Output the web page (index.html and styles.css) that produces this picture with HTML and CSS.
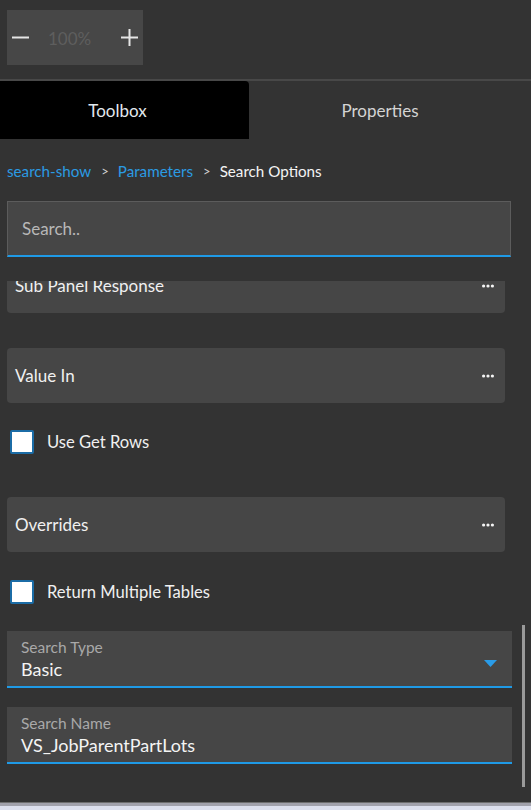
FILE: index.html
```html
<!DOCTYPE html>
<html lang="en">

<head>
    <meta charset="UTF-8">
    <meta name="viewport" content="width=device-width, initial-scale=1.0">
    <title>Properties Panel</title>
    <link rel="stylesheet" href="styles.css">
</head>

<body>
    <div class="top-bar">
        <div class="zoom-box">
            <button class="zoom-btn" aria-label="Zoom out">
                <svg width="17" height="17" viewBox="0 0 17 17"><rect x="0" y="7.5" width="17" height="2" fill="#e6e6e6"/></svg>
            </button>
            <span class="zoom-value">100%</span>
            <button class="zoom-btn" aria-label="Zoom in">
                <svg width="17" height="17" viewBox="0 0 17 17"><rect x="0" y="7.5" width="17" height="2" fill="#e6e6e6"/><rect x="7.5" y="0" width="2" height="17" fill="#e6e6e6"/></svg>
            </button>
        </div>
    </div>

    <div class="tabs">
        <div class="tab active">Toolbox</div>
        <div class="tab">Properties</div>
    </div>

    <div class="breadcrumb">
        <a href="#">search-show</a>
        <span class="sep">&gt;</span>
        <a href="#">Parameters</a>
        <span class="sep">&gt;</span>
        <span class="current">Search Options</span>
    </div>

    <div class="search-wrap">
        <input class="search" type="text" placeholder="Search..">
    </div>

    <div class="scroll-area">
        <div class="scroll-content">
            <div class="list">
                <div class="card">
                    <span>Sub Panel Response</span>
                    <svg class="more" width="12" height="4" viewBox="0 0 12 4"><circle cx="1.6" cy="2" r="1.6"/><circle cx="6" cy="2" r="1.6"/><circle cx="10.4" cy="2" r="1.6"/></svg>
                </div>
                <div class="card">
                    <span>Value In</span>
                    <svg class="more" width="12" height="4" viewBox="0 0 12 4"><circle cx="1.6" cy="2" r="1.6"/><circle cx="6" cy="2" r="1.6"/><circle cx="10.4" cy="2" r="1.6"/></svg>
                </div>
                <label class="check-row first-check">
                    <span class="checkbox"></span>
                    <span>Use Get Rows</span>
                </label>
                <div class="card overrides">
                    <span>Overrides</span>
                    <svg class="more" width="12" height="4" viewBox="0 0 12 4"><circle cx="1.6" cy="2" r="1.6"/><circle cx="6" cy="2" r="1.6"/><circle cx="10.4" cy="2" r="1.6"/></svg>
                </div>
                <label class="check-row second-check">
                    <span class="checkbox"></span>
                    <span>Return Multiple Tables</span>
                </label>
                <div class="field select">
                    <div class="field-text">
                        <div class="field-label">Search Type</div>
                        <div class="field-value">Basic</div>
                    </div>
                    <svg class="caret" width="13" height="7" viewBox="0 0 13 7"><path d="M0 0 H13 L6.5 7 Z"/></svg>
                </div>
                <div class="field name">
                    <div class="field-text">
                        <div class="field-label">Search Name</div>
                        <div class="field-value">VS_JobParentPartLots</div>
                    </div>
                </div>
            </div>
        </div>
        <div class="scroll-track">
            <div class="scroll-thumb"></div>
        </div>
    </div>

    <div class="status-strip"></div>
</body>

</html>
```

FILE: styles.css
```css
body {
    margin: 0;
    padding: 0;
    height: 810px;
    overflow: hidden;
    background-color: #333333;
    color: #f0f0f0;
    font-family: Lato, "Noto Sans", sans-serif;
    display: flex;
    flex-direction: column;
}

.top-bar {
    height: 81px;
    flex-shrink: 0;
    padding: 10px 7px 0;
    box-sizing: border-box;
    border-bottom: 2px solid #484848;
}

.zoom-box {
    width: 136px;
    height: 55px;
    background-color: #474747;
    display: flex;
    align-items: center;
    padding: 0 5px;
    box-sizing: border-box;
}

.zoom-btn {
    background: none;
    border: none;
    padding: 0;
    width: 17px;
    height: 17px;
    display: flex;
    cursor: pointer;
}

.zoom-value {
    color: #5e5e5e;
    font-size: 17px;
    margin: 2px auto 0 19px;
}

.tabs {
    display: flex;
    height: 58px;
    flex-shrink: 0;
}

.tab {
    width: 249px;
    display: flex;
    align-items: center;
    justify-content: center;
    font-size: 17px;
    color: #d4d4d4;
    padding: 0 14px 0 0;
    box-sizing: border-box;
}

.tab.active {
    background-color: #000;
    color: #e2e8ee;
    border-top-right-radius: 4px;
}

.tab:last-child {
    flex: 1;
    padding-right: 20px;
}

.breadcrumb {
    height: 62px;
    flex-shrink: 0;
    padding: 2px 0 0 7px;
    box-sizing: border-box;
    display: flex;
    align-items: center;
    font-size: 15.2px;
}

.breadcrumb a {
    color: #2b9be3;
    text-decoration: none;
}

.breadcrumb .sep {
    color: #cfcfcf;
    font-size: 13px;
    margin: 0 9px 0 10px;
}

.breadcrumb .current {
    color: #f4f4f4;
}

.search-wrap {
    padding: 0 20px 0 7px;
    flex-shrink: 0;
}

.search {
    width: 100%;
    height: 56px;
    box-sizing: border-box;
    background-color: #464646;
    border: 1px solid #5c5c5c;
    border-bottom: 2px solid #1f9ae6;
    padding: 0 14px;
    font-family: inherit;
    font-size: 17px;
    color: #f0f0f0;
    outline: none;
}

.search::placeholder {
    color: #b8b8b8;
}

.scroll-area {
    margin-top: 24px;
    height: 521px;
    flex-shrink: 0;
    display: flex;
    overflow: hidden;
}

.scroll-content {
    flex: 1;
    overflow: hidden;
}

.list {
    margin-top: -23px;
    padding-left: 7px;
    display: flex;
    flex-direction: column;
}

.card {
    width: 498px;
    height: 55px;
    background-color: #464646;
    border-radius: 4px;
    display: flex;
    align-items: center;
    justify-content: space-between;
    padding: 0 11px 0 8px;
    box-sizing: border-box;
    font-size: 17px;
    margin-bottom: 35px;
}

.card .more {
    fill: #f4f4f4;
}

.check-row {
    display: flex;
    align-items: center;
    gap: 13px;
    font-size: 16.6px;
    padding-left: 3px;
    height: 24px;
}

.first-check {
    margin-top: -8px;
    margin-bottom: 43px;
}

.overrides {
    margin-bottom: 28px;
}

.second-check {
    margin-bottom: 27px;
}

.checkbox {
    width: 20px;
    height: 20px;
    background-color: #fff;
    border: 2px solid #1b6ca6;
    border-radius: 2px;
}

.field {
    width: 505px;
    height: 57px;
    background-color: #464646;
    border-bottom: 2px solid #1f9ae6;
    box-sizing: border-box;
    display: flex;
    align-items: center;
    justify-content: space-between;
    padding: 1px 14px 0 14px;
}

.field.select {
    margin-bottom: 19px;
}

.field-label {
    font-size: 15.5px;
    color: #a9a9a9;
    line-height: 19px;
}

.field-value {
    font-size: 18px;
    color: #f4f4f4;
    line-height: 23px;
    margin-top: 1px;
}

.caret {
    fill: #2a9ce8;
    margin: 8px 1px 0 0;
}

.scroll-track {
    width: 19px;
    display: flex;
    justify-content: center;
    padding-left: 7px;
    box-sizing: border-box;
    padding-right: 3px;
}

.scroll-thumb {
    width: 3px;
    height: 162px;
    margin-top: 344px;
    background-color: #9a9a9a;
}

.status-strip {
    flex: 1;
    border-top: 1px solid #6e6e6e;
    background: linear-gradient(#a2a2ac 0, #a2a2ac 3px, #dde0ee 3px);
}
```
